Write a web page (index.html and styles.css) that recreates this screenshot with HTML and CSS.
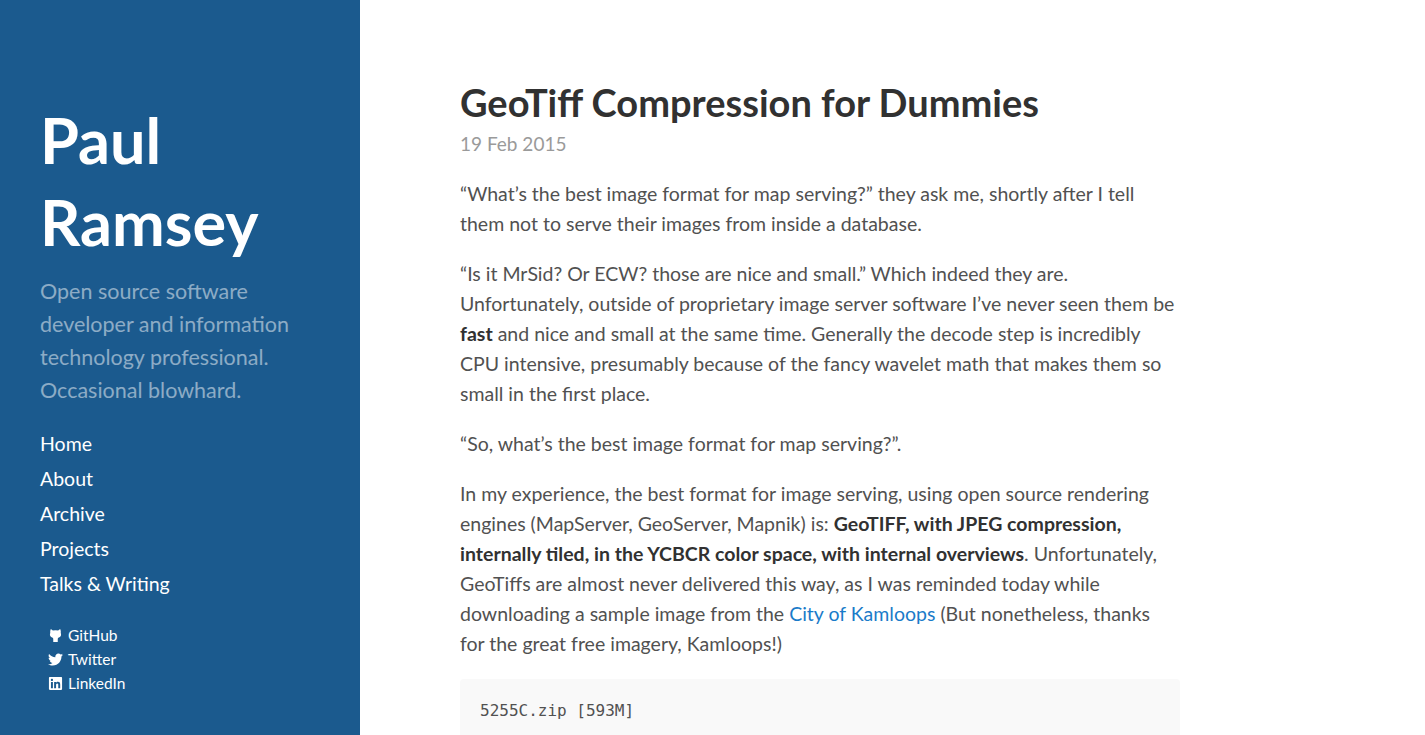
FILE: index.html
```html
<!DOCTYPE html>
<html lang="en">
<head>
    <meta charset="UTF-8">
    <title>GeoTiff Compression for Dummies - Paul Ramsey</title>
    <link rel="stylesheet" href="styles.css">
</head>
<body>
    <div class="sidebar">
        <h1 class="site-title">Paul<br>Ramsey</h1>
        <p class="lead">Open source software<br>developer and information<br>technology professional.<br>Occasional blowhard.</p>
        <nav class="nav">
            <a href="#">Home</a>
            <a href="#">About</a>
            <a href="#">Archive</a>
            <a href="#">Projects</a>
            <a href="#">Talks &amp; Writing</a>
        </nav>
        <ul class="social">
            <li>
                <svg class="icon" viewBox="0 0 16 16"><path d="M3 1L5.2 2.6Q8 2 10.8 2.6L13 1Q14 3 13.6 5Q15 9 11 10.5Q10.4 11 10.4 12V15H5.6V12Q5.6 11 5 10.5Q1 9 2.4 5Q2 3 3 1Z"/></svg>
                <a href="#">GitHub</a>
            </li>
            <li>
                <svg class="icon" viewBox="0 0 512 512"><path d="M459.37 151.716c.325 4.548.325 9.097.325 13.645 0 138.72-105.583 298.558-298.558 298.558-59.452 0-114.68-17.219-161.137-47.106 8.447.974 16.568 1.299 25.34 1.299 49.055 0 94.213-16.568 130.274-44.832-46.132-.975-84.792-31.188-98.112-72.772 6.498.974 12.995 1.624 19.818 1.624 9.421 0 18.843-1.3 27.614-3.573-48.081-9.747-84.143-51.98-84.143-102.985v-1.299c13.969 7.797 30.214 12.67 47.431 13.319-28.264-18.843-46.781-51.005-46.781-87.391 0-19.492 5.197-37.36 14.294-52.954 51.655 63.675 129.3 105.258 216.365 109.807-1.624-7.797-2.599-15.918-2.599-24.04 0-57.828 46.782-104.934 104.934-104.934 30.213 0 57.502 12.67 76.67 33.137 23.715-4.548 46.456-13.32 66.599-25.34-7.798 24.366-24.366 44.833-46.132 57.827 21.117-2.273 41.584-8.122 60.426-16.243-14.292 20.791-32.161 39.308-52.628 54.253z"/></svg>
                <a href="#">Twitter</a>
            </li>
            <li>
                <svg class="icon" viewBox="0 0 448 512"><path d="M416 32H31.9C14.3 32 0 46.5 0 64.3v383.4C0 465.5 14.3 480 31.9 480H416c17.6 0 32-14.5 32-32.3V64.3c0-17.8-14.4-32.3-32-32.3zM135.4 416H69V202.2h66.5V416zm-33.2-243c-21.3 0-38.5-17.3-38.5-38.5S80.9 96 102.2 96c21.2 0 38.5 17.3 38.5 38.5 0 21.3-17.2 38.5-38.5 38.5zm282.1 243h-66.4V312c0-24.8-.5-56.7-34.5-56.7-34.6 0-39.9 27-39.9 54.9V416h-66.4V202.2h63.7v29.2h.9c8.9-16.8 30.6-34.5 62.9-34.5 67.2 0 79.7 44.3 79.7 101.9V416z"/></svg>
                <a href="#">LinkedIn</a>
            </li>
        </ul>
    </div>

    <div class="content">
        <h1 class="post-title">GeoTiff Compression for Dummies</h1>
        <div class="post-date">19 Feb 2015</div>
        <p>“What’s the best image format for map serving?” they ask me, shortly after I tell<br>them not to serve their images from inside a database.</p>
        <p>“Is it MrSid? Or ECW? those are nice and small.” Which indeed they are.<br>Unfortunately, outside of proprietary image server software I’ve never seen them be<br><strong>fast</strong> and nice and small at the same time. Generally the decode step is incredibly<br>CPU intensive, presumably because of the fancy wavelet math that makes them so<br>small in the first place.</p>
        <p>“So, what’s the best image format for map serving?”.</p>
        <p>In my experience, the best format for image serving, using open source rendering<br>engines (MapServer, GeoServer, Mapnik) is: <strong>GeoTIFF, with JPEG compression,<br>internally tiled, in the YCBCR color space, with internal overviews</strong>. Unfortunately,<br>GeoTiffs are almost never delivered this way, as I was reminded today while<br>downloading a sample image from the <a href="#">City of Kamloops</a> (But nonetheless, thanks<br>for the great free imagery, Kamloops!)</p>
        <pre class="code">5255C.zip [593M]</pre>
    </div>
</body>
</html>
```

FILE: styles.css
```css
html, body {
    height: 100%;
    margin: 0;
    overflow: hidden;
}

body {
    display: flex;
    font-family: Lato, sans-serif;
    font-size: 19.5px;
    line-height: 30px;
    color: #515151;
    background-color: #fff;
}

/* Barra lateral */
.sidebar {
    flex: 0 0 360px;
    box-sizing: border-box;
    padding: 99px 40px 0;
    background-color: #1b5a8e;
    color: #fff;
}

.site-title {
    margin: 0 0 12px;
    font-size: 63px;
    line-height: 82px;
    font-weight: 700;
}

.lead {
    margin: 0 0 19px;
    font-size: 21.5px;
    line-height: 33px;
    color: rgba(255, 255, 255, 0.5);
}

.nav a {
    display: block;
    font-size: 19.5px;
    line-height: 35px;
    color: #fff;
    text-decoration: none;
}

.social {
    list-style: none;
    margin: 22px 0 0;
    padding: 0 0 0 8px;
}

.social li {
    display: flex;
    align-items: center;
    gap: 5px;
    font-size: 15.5px;
    line-height: 24px;
}

.social a {
    color: #fff;
    text-decoration: none;
}

.icon {
    width: 15px;
    height: 15px;
    fill: #fff;
}

/* Contenido */
.content {
    flex: 0 0 720px;
    margin-left: 100px;
    padding-top: 79px;
}

.post-title {
    margin: 0;
    font-size: 38px;
    line-height: 46px;
    font-weight: 700;
    color: #313131;
}

.post-date {
    margin-top: 4px;
    margin-bottom: 20px;
    font-size: 19px;
    line-height: 30px;
    color: #9a9a9a;
}

.content p {
    margin: 0 0 20px;
    white-space: nowrap;
}

.content strong {
    color: #313131;
}

.content a {
    color: #1a7bc9;
    text-decoration: none;
}

.code {
    margin: 1px 0 0;
    padding: 21px 20px 13px;
    border-radius: 4px 4px 0 0;
    background-color: #f9f9f9;
    font-family: "DejaVu Sans Mono", monospace;
    font-size: 16px;
    line-height: 22px;
}
```
